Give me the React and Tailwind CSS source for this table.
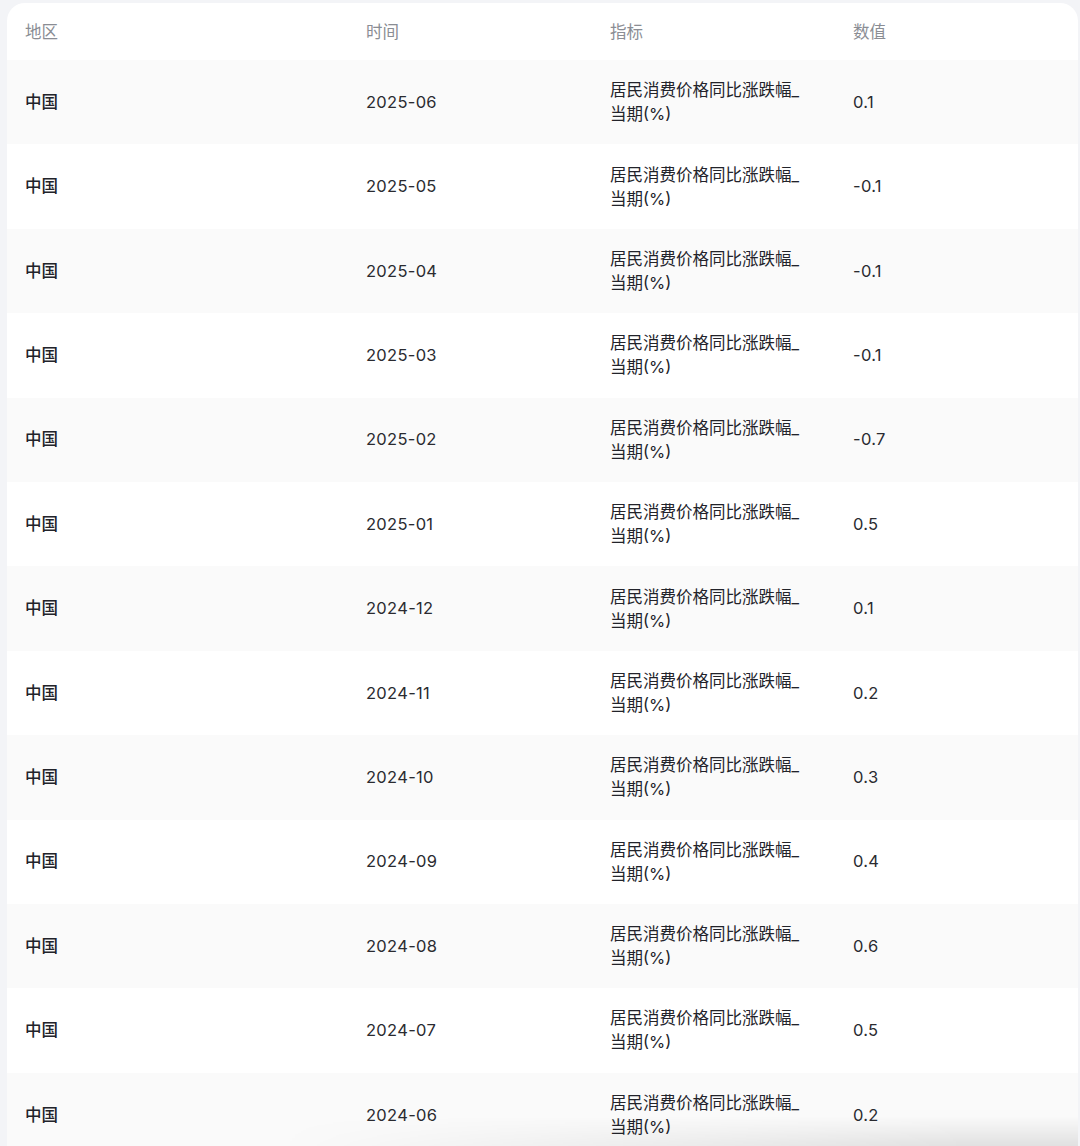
import React from 'react'

const rows = [
  ['2025-06', '0.1'],
  ['2025-05', '-0.1'],
  ['2025-04', '-0.1'],
  ['2025-03', '-0.1'],
  ['2025-02', '-0.7'],
  ['2025-01', '0.5'],
  ['2024-12', '0.1'],
  ['2024-11', '0.2'],
  ['2024-10', '0.3'],
  ['2024-09', '0.4'],
  ['2024-08', '0.6'],
  ['2024-07', '0.5'],
  ['2024-06', '0.2'],
]

const cols = 'grid grid-cols-[341px_244px_243px_1fr] pl-[18px]'

export default function App() {
  return (
    <div
      className="h-[1146px] overflow-hidden bg-[#f3f4f7] pt-[3px] pl-[7px] pr-[2px]"
      style={{ fontFamily: 'Inter, "Noto Sans CJK SC", sans-serif' }}
    >
      <div className="relative h-full bg-white rounded-t-[18px] overflow-hidden">
        {/* 表头 */}
        <div className={`${cols} h-[57px] items-center text-[16.5px] text-[#8a8d94]`}>
          <div className="pt-[1px]">地区</div>
          <div className="pt-[1px]">时间</div>
          <div className="pt-[1px]">指标</div>
          <div className="pt-[1px]">数值</div>
        </div>

        {/* 数据行 */}
        {rows.map(([date, value], i) => (
          <div
            key={date}
            className={`${cols} h-[84.4px] items-center text-[16.5px] text-[#22232a] ${
              i % 2 === 0 ? 'bg-[#fafafa]' : 'bg-white'
            }`}
          >
            <div className="font-medium">中国</div>
            <div className="text-[#2a2b30] tracking-[0.3px]">{date}</div>
            <div className="leading-[24px]">
              <div>居民消费价格同比涨跌幅_</div>
              <div>当期(%)</div>
            </div>
            <div className="text-[#2a2b30] tracking-[0.3px]">{value}</div>
          </div>
        ))}

        {/* 底部阴影 */}
        <div className="absolute bottom-0 left-0 right-0 h-[30px] bg-gradient-to-b from-transparent to-black/10 [mask-image:linear-gradient(to_right,transparent_25%,black_90%)]" />
      </div>
    </div>
  )
}
